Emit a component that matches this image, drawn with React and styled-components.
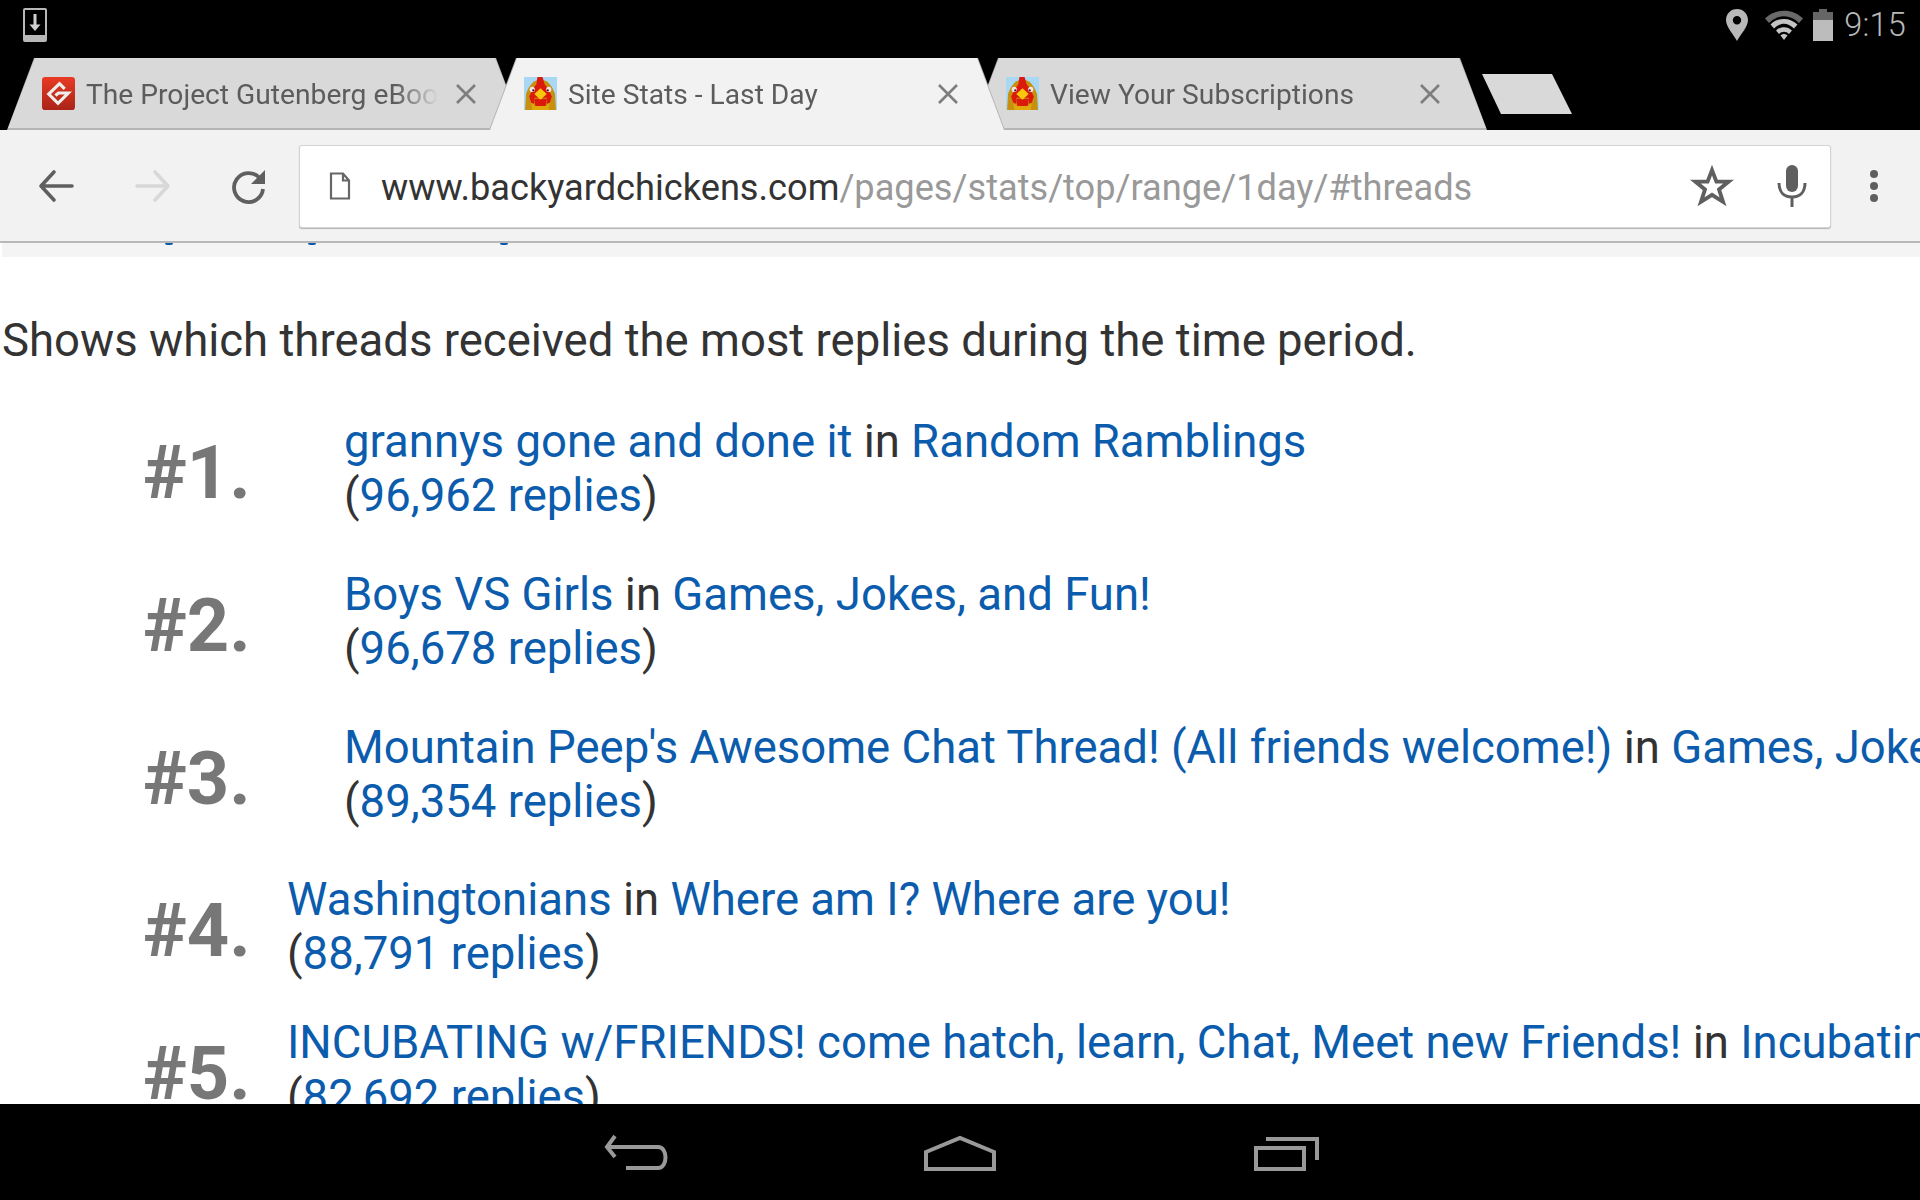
import React from "react";
import styled, { createGlobalStyle } from "styled-components";

const Global = createGlobalStyle`
  html, body { margin: 0; padding: 0; background: #000; }
  body { font-family: Roboto, "Liberation Sans", sans-serif; }
`;

const Screen = styled.div`
  width: 1920px; height: 1200px; display: flex; flex-direction: column;
  overflow: hidden; background: #000;
`;

const StatusBar = styled.div`
  height: 58px; flex: none; display: flex; align-items: center; justify-content: space-between;
  padding: 0 14px 8px 23px; box-sizing: border-box; color: #b8b8b8;
`;
const StatusRight = styled.div`display: flex; align-items: center;`;
const StatusIcon = styled.svg`flex: none; display: block; margin-left: ${p => p.$ml || 0}px;`;
const Clock = styled.span`
  font-size: 32.5px; font-weight: 300; margin-left: 11px; letter-spacing: 0.2px; line-height: 50px;
`;

const TabStrip = styled.div`
  height: 72px; flex: none; display: flex; padding-left: 7px; box-sizing: border-box;
`;
const shape = "polygon(27px 0, calc(100% - 27px) 0, 100% 100%, 0 100%)";
const Tab = styled.div`
  width: 516px; height: 72px; flex: none; position: relative; margin-left: ${p => p.$first ? 0 : "-34px"};
  z-index: ${p => p.$active ? 2 : 1}; background: #b4b4b4; clip-path: ${shape};
  display: flex; align-items: center; padding: 0 0 1px 35px; box-sizing: border-box;
  &::before {
    content: ""; position: absolute; left: 1px; right: 1px; top: 0; bottom: ${p => p.$active ? 0 : "2px"};
    background: ${p => p.$active ? "#f2f2f2" : "#d9d9d9"}; clip-path: ${shape};
  }
  & > * { position: relative; }
`;
const Favicon = styled.svg`
  width: 33px; height: 33px; flex: none; display: block;
  filter: ${p => p.$soft ? "blur(0.6px)" : "none"};
`;
const TabTitle = styled.span`
  width: 352px; margin-left: 11px; padding-top: 1px; font-size: 28.2px; color: #5c5c5c; white-space: nowrap; overflow: hidden;
  -webkit-mask-image: linear-gradient(to right, #000 88%, transparent 100%);
  mask-image: linear-gradient(to right, #000 88%, transparent 100%);
`;
const TabClose = styled.svg`width: 22px; height: 22px; margin-left: 17px; flex: none;`;
const NewTab = styled.div`
  width: 90px; height: 40px; flex: none; margin: 16px 0 0 -5px; background: #d9d9d9;
  clip-path: polygon(0 0, 70px 0, 100% 100%, 19px 100%);
`;

const Toolbar = styled.div`
  height: 113px; flex: none; box-sizing: border-box; background: #f2f2f2; border-bottom: 2px solid #b8b8b8;
  display: flex; align-items: center; padding-top: 1px; position: relative; z-index: 3;
`;
const NavIcon = styled.svg`width: 40px; height: 40px; flex: none; margin-left: ${p => p.$ml}px;`;
const Omnibox = styled.div`
  width: 1530px; height: 81px; margin-left: 31px; flex: none; box-sizing: border-box; background: #fff;
  border-radius: 2px; box-shadow: 0 0 0 1px #d4d4d4, 0 1px 1px 1px #b4b4b4; display: flex; align-items: center; padding-left: 28px;
`;
const PageGlyph = styled.svg`width: 24px; height: 28px; flex: none;`;
const Url = styled.div`
  flex: 1; margin-left: 29px; padding-top: 3px; font-size: 36.2px; color: #999; white-space: nowrap;
`;
const Host = styled.span`color: #333;`;
const OmniIcon = styled.svg`width: 44px; height: 44px; flex: none; margin-right: ${p => p.$mr}px;`;
const Dots = styled.svg`width: 14px; height: 36px; flex: none; margin-left: 37px;`;

const Page = styled.div`
  flex: 1; min-height: 0; overflow: hidden; background: #fff; color: #333;
`;
const Band = styled.div`
  height: 14px; margin-left: 2px; background: #f4f4f4; display: flex; align-items: flex-start; padding-left: 163px;
`;
const Descender = styled.i`
  width: 8px; height: 2px; margin-right: ${p => p.$gap}px; background: #0b5cad; border-radius: 0 0 3px 3px; display: block;
`;
const Intro = styled.p`
  margin: 57px 0 47px 2px; font-size: 45.5px; line-height: 54px; white-space: nowrap;
`;
const Row = styled.div`
  display: flex; align-items: flex-start; white-space: nowrap; padding-left: 143px; margin-bottom: ${p => p.$gap}px;
`;
const Rank = styled.div`
  width: ${p => p.$wide ? 201 : 144}px; flex: none; font-size: 74px; font-weight: 700; color: #777; line-height: 101px; padding-top: 7px;
`;
const Lines = styled.div`font-size: 45.5px; line-height: 54px;`;
const Line = styled.div``;
const A = styled.a`color: #0b5cad; text-decoration: none;`;

const NavBar = styled.div`
  height: 96px; flex: none; background: #000; display: flex; justify-content: center; align-items: flex-start; padding-top: 28px; box-sizing: border-box;
`;
const SoftKey = styled.svg`width: 80px; height: 50px; flex: none; margin: 0 ${p => p.$m}px;`;

const DownloadIcon = () => (
  <svg width="24" height="34" viewBox="0 0 24 34">
    <rect x="1" y="1" width="22" height="32" fill="none" stroke="#b8b8b8" strokeWidth="2" rx="1" />
    <rect x="1" y="27" width="22" height="6" fill="#b8b8b8" />
    <path d="M12 6v15" stroke="#cfcfcf" strokeWidth="3" />
    <path d="M6.500 16.500h11L12 23z" fill="#cfcfcf" />
  </svg>
);

const GutenbergIcon = () => (
  <Favicon viewBox="0 0 32 32">
    <defs>
      <linearGradient id="gb" x1="0" y1="0" x2="0" y2="1">
        <stop offset="0" stopColor="#e83a23" />
        <stop offset="1" stopColor="#aa2418" />
      </linearGradient>
    </defs>
    <rect width="32" height="32" rx="3" fill="url(#gb)" />
    <path d="M22 11.500 L17 6.500 L6.500 16.500 L15.500 25.500 L25.500 15.500 L16 15.500 L13 18"
      fill="none" stroke="#eee" strokeWidth="3" strokeLinejoin="miter" />
  </Favicon>
);

const ChickenIcon = () => (
  <Favicon $soft viewBox="0 0 32 32">
    <rect width="32" height="32" fill="#a8d8f4" />
    <path d="M1 32 L2 16 Q6 5 13 3 L19 3 Q26 5 30 16 L31 32z" fill="#c8900f" />
    <path d="M13 0 L18 0 L20 7 L23 11 L27 19 L25 25 L22 26 L22 20 L10 20 L10 26 L7 25 L5 19 L9 11 L12 7z" fill="#dc1a0c" />
    <path d="M7 25 L11 28 L21 28 L25 25 L24 32 L8 32z" fill="#e0a80a" />
    <path d="M10 21 L22 21 L21 28 L11 28z" fill="#dc1a0c" />
    <circle cx="8" cy="12" r="2.500" fill="#f3e6e6" />
    <circle cx="24" cy="12" r="2.500" fill="#f3e6e6" />
    <circle cx="9" cy="13" r="1.100" fill="#5a1020" />
    <circle cx="23" cy="13" r="1.100" fill="#5a1020" />
    <path d="M16 11 L22 16.500 L16 22 L10 16.500z" fill="#f8c80c" />
  </Favicon>
);

const CloseIcon = () => (
  <TabClose viewBox="0 0 22 22">
    <path d="M2 2L20 20M20 2L2 20" stroke="#7d7d7d" strokeWidth="2.600" />
  </TabClose>
);

const rows = [
  { n: 1, wide: true, title: "grannys gone and done it", forum: "Random Ramblings", count: "96,962", gap: 45 },
  { n: 2, wide: true, title: "Boys VS Girls", forum: "Games, Jokes, and Fun!", count: "96,678", gap: 45 },
  { n: 3, wide: true, title: "Mountain Peep's Awesome Chat Thread! (All friends welcome!)", forum: "Games, Jokes, and Fun!", count: "89,354", gap: 44 },
  { n: 4, title: "Washingtonians", forum: "Where am I? Where are you!", count: "88,791", gap: 35 },
  { n: 5, title: "INCUBATING w/FRIENDS! come hatch, learn, Chat, Meet new Friends!", forum: "Incubating & Hatching Eggs", count: "82,692", gap: 0 },
];

export default function App() {
  return (
    <Screen>
      <Global />
      <StatusBar>
        <DownloadIcon />
        <StatusRight>
          <StatusIcon width="22" height="32" viewBox="0 0 22 32">
            <path fillRule="evenodd" d="M11 0C4.900 0 0 4.800 0 11c0 7 8 15 11 21 3-6 11-14 11-21C22 4.800 17.100 0 11 0zm0 7a4.200 4.200 0 1 1 0 8.400A4.200 4.200 0 0 1 11 7z" fill="#b8b8b8" />
          </StatusIcon>
          <StatusIcon $ml={17} width="38" height="30" viewBox="0 0 38 30">
            <path d="M0 8.500C10-2 28-2 38 8.500L34 13C25.500 4 12.500 4 4 13z" fill="#6a6a6a" />
            <path d="M5.500 14.500C13 7 25 7 32.500 14.500L29 18.500C22.500 12 15.500 12 9 18.500z" fill="#c4c4c4" />
            <path d="M11 20.500C15.500 16 22.500 16 27 20.500L24 24C21 21 17 21 14 24z" fill="#c4c4c4" />
            <path d="M15.500 25.500C17.500 23.500 20.500 23.500 22.500 25.500L19 30z" fill="#c4c4c4" />
          </StatusIcon>
          <StatusIcon $ml={10} width="20" height="32" viewBox="0 0 20 32">
            <path d="M6 0h8v3h6v8H0V3h6z" fill="#666" />
            <rect y="11" width="20" height="21" fill="#bcbcbc" />
          </StatusIcon>
          <Clock>9:15</Clock>
        </StatusRight>
      </StatusBar>

      <TabStrip>
        <Tab $first>
          <GutenbergIcon />
          <TabTitle>The Project Gutenberg eBook</TabTitle>
          <CloseIcon />
        </Tab>
        <Tab $active>
          <ChickenIcon />
          <TabTitle>Site Stats - Last Day</TabTitle>
          <CloseIcon />
        </Tab>
        <Tab>
          <ChickenIcon />
          <TabTitle>View Your Subscriptions</TabTitle>
          <CloseIcon />
        </Tab>
        <NewTab />
      </TabStrip>

      <Toolbar>
        <NavIcon $ml={36} viewBox="0 0 40 40">
          <path d="M36 20H6M18 6L5 20l13 14" fill="none" stroke="#5f5f5f" strokeWidth="3.600" strokeLinecap="round" strokeLinejoin="round" />
        </NavIcon>
        <NavIcon $ml={57} viewBox="0 0 40 40">
          <path d="M4 20h30M22 6l13 14-13 14" fill="none" stroke="#d8d8d8" strokeWidth="3.600" strokeLinecap="round" strokeLinejoin="round" />
        </NavIcon>
        <NavIcon $ml={56} viewBox="0 0 40 40">
          <path d="M30.500 12A14.500 14.500 0 1 0 34 23" fill="none" stroke="#5f5f5f" strokeWidth="3.800" />
          <path d="M36 4V18H22z" fill="#5f5f5f" />
        </NavIcon>
        <Omnibox>
          <PageGlyph viewBox="0 0 24 28">
            <path d="M3 1.500h12l6 7V26.500H3z M15 1.500V8.500h6" fill="none" stroke="#666" strokeWidth="2.200" />
          </PageGlyph>
          <Url><Host>www.backyardchickens.com</Host>/pages/stats/top/range/1day/#threads</Url>
          <OmniIcon $mr={36} viewBox="-3 -3 50 50">
            <path d="M22 4l5 13h14l-11 9 4.500 14L22 32 9.500 40 14 26 3 17h14z" fill="none" stroke="#5f5f5f" strokeWidth="4.400" strokeLinejoin="miter" />
          </OmniIcon>
          <OmniIcon $mr={16} viewBox="0 0 44 44">
            <rect x="16" y="1" width="12" height="27" rx="6" fill="#5f5f5f" />
            <path d="M9 19c0 9 5 14 13 14s13-5 13-14M22 33v10" fill="none" stroke="#5f5f5f" strokeWidth="3" />
          </OmniIcon>
        </Omnibox>
        <Dots viewBox="0 0 14 36">
          <circle cx="7" cy="6" r="4" fill="#5f5f5f" />
          <circle cx="7" cy="18" r="4" fill="#5f5f5f" />
          <circle cx="7" cy="30" r="4" fill="#5f5f5f" />
        </Dots>
      </Toolbar>

      <Page>
        <Band>
          <Descender $gap={135} />
          <Descender $gap={184} />
          <Descender $gap={0} />
        </Band>
        <Intro>Shows which threads received the most replies during the time period.</Intro>
        {rows.map((r) => (
          <Row key={r.n} $gap={r.gap}>
            <Rank $wide={r.wide}>#{r.n}.</Rank>
            <Lines>
              <Line><A>{r.title}</A> in <A>{r.forum}</A></Line>
              <Line>(<A>{r.count} replies</A>)</Line>
            </Lines>
          </Row>
        ))}
      </Page>

      <NavBar>
        <SoftKey $m={122} viewBox="0 0 80 50">
          <path d="M19 4L11 15l8 10M12 15H62C72 15 72 36 62 36H30" fill="none" stroke="#999" strokeWidth="4" />
        </SoftKey>
        <SoftKey $m={122} viewBox="0 0 80 50">
          <path d="M6 20L40 6l34 14V37H6z" fill="none" stroke="#999" strokeWidth="4" />
        </SoftKey>
        <SoftKey $m={122} viewBox="0 0 80 50">
          <path d="M12 16H60V37H12zM22 7H73V28" fill="none" stroke="#999" strokeWidth="4" />
        </SoftKey>
      </NavBar>
    </Screen>
  );
}
